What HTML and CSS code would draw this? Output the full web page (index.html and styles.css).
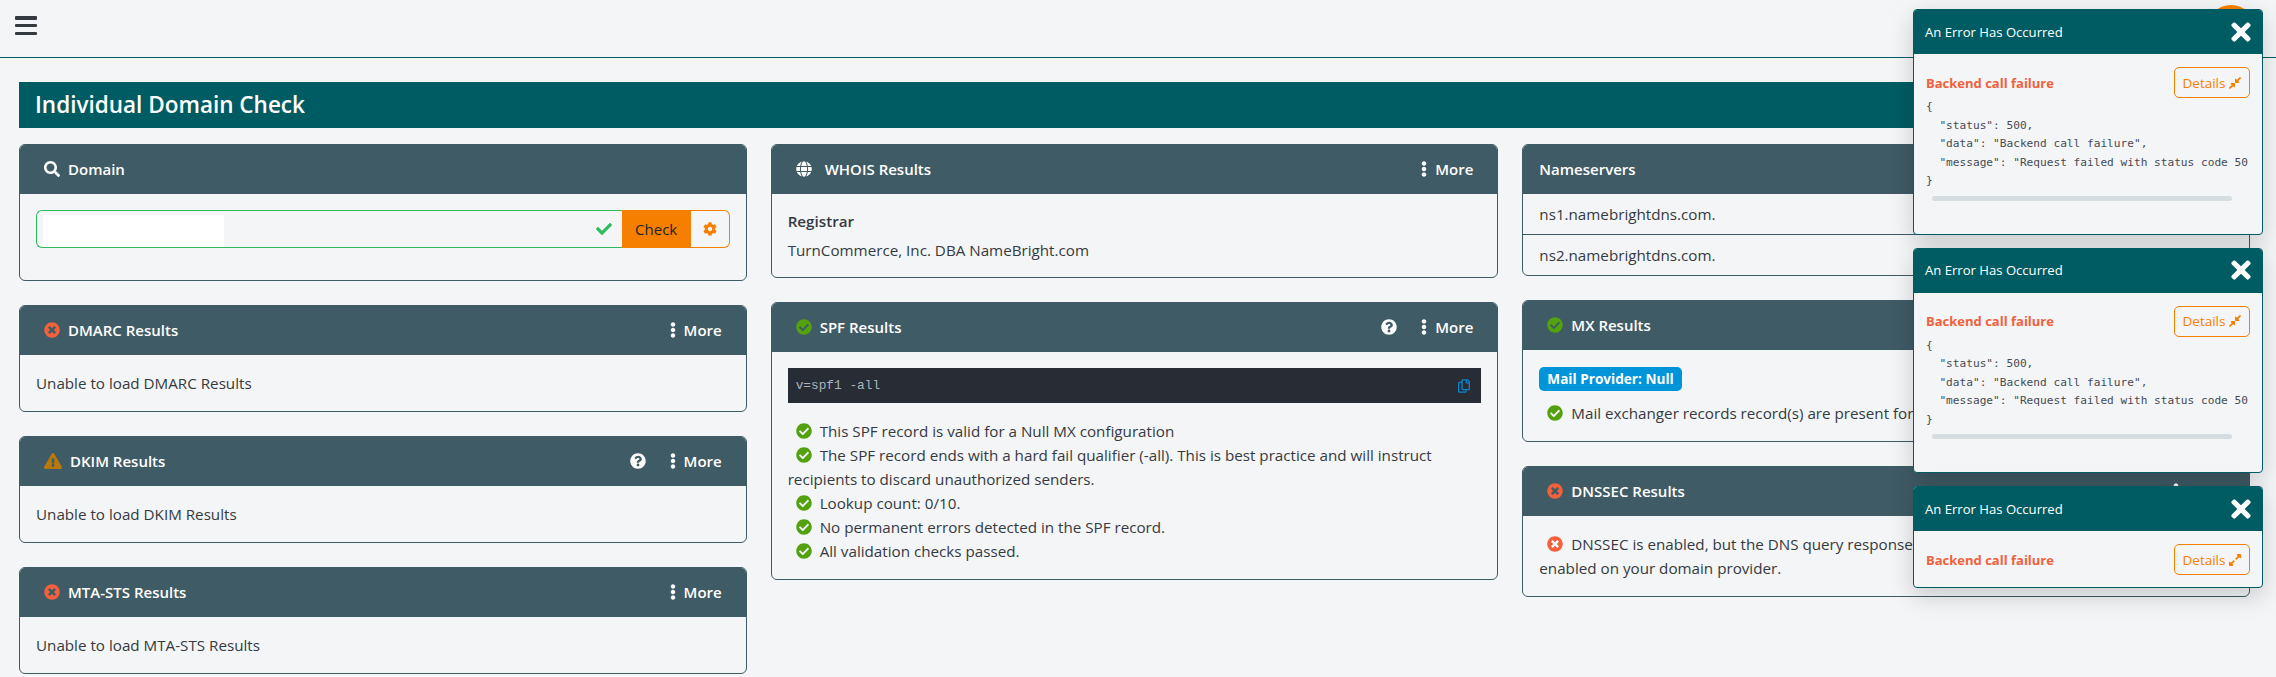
FILE: index.html
```html
<!DOCTYPE html>
<html lang="en">
<head>
    <meta charset="UTF-8">
    <meta name="viewport" content="width=device-width, initial-scale=1.0">
    <title>Individual Domain Check</title>
    <link rel="stylesheet" href="styles.css">
</head>
<body>
    <!-- icon sprite -->
    <svg class="sprite" xmlns="http://www.w3.org/2000/svg">
        <symbol id="i-search" viewBox="0 0 512 512"><path d="M505 442.7L405.3 343c-4.5-4.5-10.6-7-17-7H372c27.6-35.3 44-79.7 44-128C416 93.1 322.9 0 208 0S0 93.1 0 208s93.1 208 208 208c48.3 0 92.7-16.4 128-44v16.3c0 6.4 2.5 12.5 7 17l99.7 99.7c9.4 9.4 24.6 9.4 33.9 0l28.3-28.3c9.4-9.4 9.4-24.6.1-34zM208 336c-70.7 0-128-57.2-128-128 0-70.7 57.2-128 128-128 70.7 0 128 57.2 128 128 0 70.7-57.2 128-128 128z"/></symbol>
        <symbol id="i-check" viewBox="0 0 512 512"><path d="M173.898 439.404l-166.4-166.4c-9.997-9.997-9.997-26.206 0-36.204l36.203-36.204c9.997-9.998 26.207-9.998 36.204 0L192 312.69 432.095 72.596c9.997-9.997 26.207-9.997 36.204 0l36.203 36.204c9.997 9.997 9.997 26.206 0 36.204l-294.4 294.401c-9.998 9.997-26.207 9.997-36.204-.001z"/></symbol>
        <symbol id="i-ok" viewBox="0 0 512 512"><path d="M504 256c0 136.967-111.033 248-248 248S8 392.967 8 256 119.033 8 256 8s248 111.033 248 248zM227.314 387.314l184-184c6.248-6.248 6.248-16.379 0-22.627l-22.627-22.627c-6.248-6.249-16.379-6.249-22.628 0L216 308.118l-70.059-70.059c-6.248-6.248-16.379-6.248-22.628 0l-22.627 22.627c-6.248 6.248-6.248 16.379 0 22.627l104 104c6.249 6.249 16.379 6.249 22.628.001z"/></symbol>
        <symbol id="i-fail" viewBox="0 0 512 512"><path d="M256 8C119 8 8 119 8 256s111 248 248 248 248-111 248-248S393 8 256 8zm121.6 313.1c4.7 4.7 4.7 12.3 0 17L338 377.6c-4.7 4.7-12.3 4.7-17 0L256 312l-65.1 65.6c-4.7 4.7-12.3 4.7-17 0L134.4 338c-4.7-4.7-4.7-12.3 0-17l65.6-65-65.6-65.1c-4.7-4.7-4.7-12.3 0-17l39.6-39.6c4.7-4.7 12.3-4.7 17 0l65 65.7 65.1-65.6c4.7-4.7 12.3-4.7 17 0l39.6 39.6c4.7 4.7 4.7 12.3 0 17L312 256l65.6 65.1z"/></symbol>
        <symbol id="i-help" viewBox="0 0 512 512"><path d="M504 256c0 136.997-111.043 248-248 248S8 392.997 8 256C8 119.083 119.043 8 256 8s248 111.083 248 248zM262.655 90c-54.497 0-89.255 22.957-116.549 63.758-3.536 5.286-2.353 12.415 2.715 16.258l34.699 26.31c5.205 3.947 12.621 3.008 16.665-2.122 17.864-22.658 30.113-35.797 57.303-35.797 20.429 0 45.698 13.148 45.698 32.958 0 14.976-12.363 22.667-32.534 33.976C247.128 238.528 216 254.941 216 296v4c0 6.627 5.373 12 12 12h56c6.627 0 12-5.373 12-12v-1.333c0-28.462 83.186-29.647 83.186-106.667 0-58.002-60.165-102-116.531-102zM256 338c-25.365 0-46 20.635-46 46 0 25.364 20.635 46 46 46s46-20.636 46-46c0-25.365-20.635-46-46-46z"/></symbol>
        <symbol id="i-warn" viewBox="0 0 576 512"><path d="M569.517 440.013C587.975 472.007 564.806 512 527.94 512H48.054c-36.937 0-59.999-40.055-41.577-71.987L246.423 23.985c18.467-32.009 64.72-31.951 83.154 0l239.94 416.028zM288 354c-25.405 0-46 20.595-46 46s20.595 46 46 46 46-20.595 46-46-20.595-46-46-46zm-43.673-165.346l7.418 136c.347 6.364 5.609 11.346 11.982 11.346h48.546c6.373 0 11.635-4.982 11.982-11.346l7.418-136c.375-6.874-5.098-12.654-11.982-12.654h-63.383c-6.884 0-12.356 5.78-11.981 12.654z"/></symbol>
        <symbol id="i-dots" viewBox="0 0 192 512"><path d="M96 184c39.8 0 72 32.2 72 72s-32.2 72-72 72-72-32.2-72-72 32.2-72 72-72zM24 80c0 39.8 32.2 72 72 72s72-32.2 72-72S135.8 8 96 8 24 40.2 24 80zm0 352c0 39.8 32.2 72 72 72s72-32.2 72-72-32.2-72-72-72-72 32.2-72 72z"/></symbol>
        <symbol id="i-globe" viewBox="0 0 496 512"><path d="M336.5 160C322 70.7 287.8 8 248 8s-74 62.7-88.5 152h177zM152 256c0 22.2 1.2 43.5 3.3 64h185.3c2.1-20.5 3.3-41.8 3.3-64s-1.2-43.5-3.3-64H155.3c-2.1 20.5-3.3 41.8-3.3 64zm324.7-96c-28.6-67.9-86.5-120.4-158-141.6 24.4 33.8 41.2 84.7 50 141.6h108zM177.2 18.4C105.8 39.6 47.8 92.1 19.3 160h108c8.7-56.9 25.5-107.8 49.9-141.6zM487.4 192H372.7c2.1 21 3.3 42.5 3.3 64s-1.2 43-3.3 64h114.6c5.5-20.5 8.6-41.8 8.6-64s-3.1-43.5-8.5-64zM120 256c0-21.5 1.2-43 3.3-64H8.6C3.2 212.5 0 233.8 0 256s3.2 43.5 8.6 64h114.6c-2-21-3.2-42.5-3.2-64zm39.5 96c14.5 89.3 48.7 152 88.5 152s74-62.7 88.5-152h-177zm159.3 141.6c71.4-21.2 129.4-73.7 158-141.6h-108c-8.8 56.9-25.6 107.8-50 141.6zM19.3 352c28.6 67.9 86.5 120.4 158 141.6-24.4-33.8-41.2-84.7-50-141.6h-108z"/></symbol>
        <symbol id="i-cog" viewBox="0 0 512 512"><path d="M487.4 315.7l-42.6-24.6c4.3-23.2 4.3-47 0-70.2l42.6-24.6c4.9-2.8 7.1-8.6 5.5-14-11.1-35.6-30-67.8-54.7-94.6-3.8-4.1-10-5.1-14.8-2.3L380.8 110c-17.9-15.4-38.5-27.3-60.8-35.1V25.8c0-5.6-3.9-10.5-9.4-11.7-36.7-8.2-74.3-7.8-109.2 0-5.5 1.2-9.4 6.1-9.4 11.7V75c-22.2 7.9-42.8 19.8-60.8 35.1L88.7 85.5c-4.9-2.8-11-1.9-14.8 2.3-24.7 26.7-43.6 58.9-54.7 94.6-1.7 5.4.6 11.2 5.5 14L67.3 221c-4.3 23.2-4.3 47 0 70.2l-42.6 24.6c-4.9 2.8-7.1 8.6-5.5 14 11.1 35.6 30 67.8 54.7 94.6 3.8 4.1 10 5.1 14.8 2.3l42.6-24.6c17.9 15.4 38.5 27.3 60.8 35.1v49.2c0 5.6 3.9 10.5 9.4 11.7 36.7 8.2 74.3 7.8 109.2 0 5.5-1.2 9.4-6.1 9.4-11.7v-49.2c22.2-7.9 42.8-19.8 60.8-35.1l42.6 24.6c4.9 2.8 11 1.9 14.8-2.3 24.7-26.7 43.6-58.9 54.7-94.6 1.5-5.5-.7-11.3-5.6-14.1zM256 336c-44.1 0-80-35.9-80-80s35.9-80 80-80 80 35.9 80 80-35.9 80-80 80z"/></symbol>
        <symbol id="i-times" viewBox="0 0 352 512"><path d="M242.72 256l100.07-100.07c12.28-12.28 12.28-32.19 0-44.48l-22.24-22.24c-12.28-12.28-32.19-12.28-44.48 0L176 189.28 75.93 89.21c-12.28-12.28-32.19-12.28-44.48 0L9.21 111.45c-12.28 12.28-12.28 32.19 0 44.48L109.28 256 9.21 356.07c-12.28 12.28-12.28 32.19 0 44.48l22.24 22.24c12.28 12.28 32.2 12.28 44.48 0L176 322.72l100.07 100.07c12.28 12.28 32.2 12.28 44.48 0l22.24-22.24c12.28-12.28 12.28-32.19 0-44.48L242.72 256z"/></symbol>
        <symbol id="i-expand" viewBox="0 0 448 512"><path d="M212.686 315.314L120 408l32.922 31.029c15.12 15.12 4.412 40.971-16.97 40.971h-112C10.697 480 0 469.255 0 456V344c0-21.382 25.803-32.09 40.922-16.971L72 360l92.686-92.686c6.248-6.248 16.379-6.248 22.627 0l25.373 25.373c6.249 6.248 6.249 16.378 0 22.627zm22.628-118.628L328 104l-32.922-31.029C279.958 57.851 290.666 32 312.048 32h112C437.303 32 448 42.745 448 56v112c0 21.382-25.803 32.09-40.922 16.971L376 152l-92.686 92.686c-6.248 6.248-16.379 6.248-22.627 0l-25.373-25.373c-6.249-6.248-6.249-16.378 0-22.627z"/></symbol>
        <symbol id="i-compress" viewBox="0 0 448 512"><path d="M4.686 427.314L104 328l-32.922-31.029C55.958 281.851 66.666 256 88.048 256h112C213.303 256 224 266.745 224 280v112c0 21.382-25.803 32.09-40.922 16.971L152 376l-99.314 99.314c-6.248 6.248-16.379 6.248-22.627 0L4.686 449.941c-6.248-6.248-6.248-16.379 0-22.627zM443.314 84.686L344 184l32.922 31.029c15.12 15.12 4.412 40.971-16.97 40.971h-112C234.697 256 224 245.255 224 232V120c0-21.382 25.803-32.09 40.922-16.971L296 136l99.314-99.314c6.248-6.248 16.379-6.248 22.627 0l25.373 25.373c6.248 6.248 6.248 16.379 0 22.627z"/></symbol>
        <symbol id="i-copy" viewBox="0 0 448 512"><path d="M433.941 65.941l-51.882-51.882A48 48 0 0 0 348.118 0H176c-26.51 0-48 21.49-48 48v48H48c-26.51 0-48 21.49-48 48v320c0 26.51 21.49 48 48 48h224c26.51 0 48-21.49 48-48v-48h80c26.51 0 48-21.49 48-48V99.882a48 48 0 0 0-14.059-33.941zM266 464H54a6 6 0 0 1-6-6V150a6 6 0 0 1 6-6h74v224c0 26.51 21.49 48 48 48h96v42a6 6 0 0 1-6 6zm128-96H182a6 6 0 0 1-6-6V54a6 6 0 0 1 6-6h106v88c0 13.255 10.745 24 24 24h88v202a6 6 0 0 1-6 6zm6-256h-64V48h9.632c1.591 0 3.117.632 4.243 1.757l48.368 48.368a6 6 0 0 1 1.757 4.243V112z"/></symbol>
    </svg>

    <nav class="navbar">
        <button class="menu-btn" aria-label="Menu"><span></span><span></span><span></span></button>
        <div class="avatar"></div>
    </nav>

    <main class="content">
        <h1 class="page-title">Individual Domain Check</h1>
        <div class="columns">
            <div class="col">
                <section class="card">
                    <header class="card-head">
                        <div class="head-title"><svg class="ico"><use href="#i-search"/></svg>Domain</div>
                    </header>
                    <div class="card-body domain-body">
                        <div class="domain-group">
                            <div class="domain-input">
                                <div class="redacted"></div>
                                <svg class="ico valid-tick"><use href="#i-check"/></svg>
                            </div>
                            <button class="check-btn">Check</button>
                            <button class="cog-btn" aria-label="Settings"><svg class="ico"><use href="#i-cog"/></svg></button>
                        </div>
                    </div>
                </section>
                <section class="card">
                    <header class="card-head">
                        <div class="head-title"><svg class="ico red"><use href="#i-fail"/></svg>DMARC Results</div>
                        <div class="head-actions"><span class="more"><svg class="ico dots"><use href="#i-dots"/></svg>More</span></div>
                    </header>
                    <div class="card-body">Unable to load DMARC Results</div>
                </section>
                <section class="card">
                    <header class="card-head">
                        <div class="head-title"><svg class="ico warn"><use href="#i-warn"/></svg>DKIM Results</div>
                        <div class="head-actions"><svg class="ico"><use href="#i-help"/></svg><span class="more"><svg class="ico dots"><use href="#i-dots"/></svg>More</span></div>
                    </header>
                    <div class="card-body">Unable to load DKIM Results</div>
                </section>
                <section class="card">
                    <header class="card-head">
                        <div class="head-title"><svg class="ico red"><use href="#i-fail"/></svg>MTA-STS Results</div>
                        <div class="head-actions"><span class="more"><svg class="ico dots"><use href="#i-dots"/></svg>More</span></div>
                    </header>
                    <div class="card-body">Unable to load MTA-STS Results</div>
                </section>
            </div>

            <div class="col">
                <section class="card">
                    <header class="card-head">
                        <div class="head-title"><svg class="ico globe"><use href="#i-globe"/></svg>WHOIS Results</div>
                        <div class="head-actions"><span class="more"><svg class="ico dots"><use href="#i-dots"/></svg>More</span></div>
                    </header>
                    <div class="card-body whois-body">
                        <div class="whois-label">Registrar</div>
                        <div>TurnCommerce, Inc. DBA NameBright.com</div>
                    </div>
                </section>
                <section class="card">
                    <header class="card-head">
                        <div class="head-title"><svg class="ico green"><use href="#i-ok"/></svg>SPF Results</div>
                        <div class="head-actions"><svg class="ico"><use href="#i-help"/></svg><span class="more"><svg class="ico dots"><use href="#i-dots"/></svg>More</span></div>
                    </header>
                    <div class="card-body">
                        <div class="record"><code>v=spf1 -all</code><svg class="copy"><use href="#i-copy"/></svg></div>
                        <div class="result-line"><svg class="ico green"><use href="#i-ok"/></svg>This SPF record is valid for a Null MX configuration</div>
                        <div class="result-line"><svg class="ico green"><use href="#i-ok"/></svg>The SPF record ends with a hard fail qualifier (-all). This is best practice and will instruct recipients to discard unauthorized senders.</div>
                        <div class="result-line"><svg class="ico green"><use href="#i-ok"/></svg>Lookup count: 0/10.</div>
                        <div class="result-line"><svg class="ico green"><use href="#i-ok"/></svg>No permanent errors detected in the SPF record.</div>
                        <div class="result-line"><svg class="ico green"><use href="#i-ok"/></svg>All validation checks passed.</div>
                    </div>
                </section>
            </div>

            <div class="col">
                <section class="card">
                    <header class="card-head ns-head">
                        <div class="head-title">Nameservers</div>
                    </header>
                    <ul class="ns-list">
                        <li>ns1.namebrightdns.com.</li>
                        <li>ns2.namebrightdns.com.</li>
                    </ul>
                </section>
                <section class="card">
                    <header class="card-head">
                        <div class="head-title"><svg class="ico green"><use href="#i-ok"/></svg>MX Results</div>
                        <div class="head-actions"><span class="more"><svg class="ico dots"><use href="#i-dots"/></svg>More</span></div>
                    </header>
                    <div class="card-body">
                        <span class="badge">Mail Provider: Null</span>
                        <div class="result-line mx-line"><svg class="ico green"><use href="#i-ok"/></svg>Mail exchanger records record(s) are present for this domain.</div>
                    </div>
                </section>
                <section class="card">
                    <header class="card-head">
                        <div class="head-title"><svg class="ico red"><use href="#i-fail"/></svg>DNSSEC Results</div>
                        <div class="head-actions"><span class="more"><svg class="ico dots"><use href="#i-dots"/></svg>More</span></div>
                    </header>
                    <div class="card-body">
                        <div class="result-line"><svg class="ico red"><use href="#i-fail"/></svg>DNSSEC is enabled, but the DNS query response does not have the AD flag. Ensure it is<br>enabled on your domain provider.</div>
                    </div>
                </section>
            </div>
        </div>
    </main>

    <div class="toasts">
        <div class="toast">
            <div class="toast-head">An Error Has Occurred<svg class="toast-close"><use href="#i-times"/></svg></div>
            <div class="toast-body">
                <div class="toast-row">
                    <strong class="toast-msg">Backend call failure</strong>
                    <button class="details-btn">Details<svg class="ico"><use href="#i-compress"/></svg></button>
                </div>
                <pre class="toast-pre">{
  "status": 500,
  "data": "Backend call failure",
  "message": "Request failed with status code 500"
}</pre>
                <div class="fake-scroll"></div>
            </div>
        </div>
        <div class="toast">
            <div class="toast-head">An Error Has Occurred<svg class="toast-close"><use href="#i-times"/></svg></div>
            <div class="toast-body">
                <div class="toast-row">
                    <strong class="toast-msg">Backend call failure</strong>
                    <button class="details-btn">Details<svg class="ico"><use href="#i-compress"/></svg></button>
                </div>
                <pre class="toast-pre">{
  "status": 500,
  "data": "Backend call failure",
  "message": "Request failed with status code 500"
}</pre>
                <div class="fake-scroll"></div>
            </div>
        </div>
        <div class="toast">
            <div class="toast-head">An Error Has Occurred<svg class="toast-close"><use href="#i-times"/></svg></div>
            <div class="toast-body">
                <div class="toast-row">
                    <strong class="toast-msg">Backend call failure</strong>
                    <button class="details-btn">Details<svg class="ico"><use href="#i-expand"/></svg></button>
                </div>
            </div>
        </div>
    </div>
</body>
</html>
```

FILE: styles.css
```css
* {
    box-sizing: border-box;
}

body {
    margin: 0;
    height: 677px;
    overflow: hidden;
    background-color: #f4f5f7;
    color: #343a40;
    font-family: 'Open Sans', 'Noto Sans', sans-serif;
    font-size: 15.2px;
    line-height: 24px;
}

.sprite {
    display: none;
}

.ico {
    width: 16px;
    height: 16px;
    fill: currentColor;
    flex: none;
}

.red { color: #f0613c; }
.green { color: #53a10d; }
.warn { color: #b8790a; }

.ico.warn {
    width: 18px;
}

/* top bar */
.navbar {
    height: 58px;
    border-bottom: 1px solid #005c63;
    display: flex;
    justify-content: space-between;
    padding: 16px 21px 0 15px;
}

.menu-btn {
    width: 22px;
    height: 19px;
    padding: 0;
    border: 0;
    background: none;
    display: flex;
    flex-direction: column;
    justify-content: space-between;
}

.menu-btn span {
    display: block;
    height: 3.500px;
    background-color: #343a40;
    border-radius: 1px;
}

.avatar {
    width: 48px;
    height: 48px;
    margin-top: -11px;
    border-radius: 50%;
    background-color: #f77f00;
}

/* page */
.content {
    padding: 24px 26px 0 19px;
}

.page-title {
    margin: 0 0 16px;
    height: 46px;
    padding: 0 16px;
    background-color: #005c63;
    color: #fff;
    font-size: 22.5px;
    font-weight: 600;
    line-height: 45px;
}

.columns {
    display: grid;
    grid-template-columns: repeat(3, 1fr);
    gap: 24px;
    align-items: start;
}

.col {
    display: flex;
    flex-direction: column;
    gap: 24px;
}

/* cards */
.card {
    border: 1px solid #3f5b65;
    border-radius: 6px;
    overflow: hidden;
}

.card-head {
    height: 49px;
    padding: 0 24px 2px;
    display: flex;
    align-items: center;
    justify-content: space-between;
    background-color: #3f5b65;
    color: #fff;
    font-weight: 600;
    font-size: 15px;
}

.ns-head {
    padding-left: 16px;
}

.head-title {
    display: flex;
    align-items: center;
    gap: 8px;
}

.head-title .globe {
    margin-right: 5px;
}

.head-actions {
    display: flex;
    align-items: center;
    gap: 24px;
}

.more {
    display: flex;
    align-items: center;
    gap: 8px;
}

.ico.dots {
    width: 6px;
}

.card-body {
    padding: 16px;
}

/* domain search */
.domain-body {
    padding-bottom: 32px;
}

.domain-group {
    display: flex;
    height: 38px;
}

.domain-input {
    flex: 1;
    display: flex;
    align-items: center;
    justify-content: space-between;
    padding: 4px 10px 0 6px;
    border: 1px solid #2dbb5e;
    border-right: 0;
    border-radius: 6px 0 0 6px;
}

.redacted {
    width: 181px;
    height: 32px;
    background-color: #fff;
}

.valid-tick {
    color: #2dbb5e;
    margin-top: -4px;
}

.check-btn {
    width: 69px;
    border: 0;
    background-color: #f77f00;
    color: #212529;
    font: inherit;
    font-size: 15px;
}

.cog-btn {
    width: 39px;
    padding: 0;
    background: none;
    color: #f77f00;
    border: 1px solid #f77f00;
    border-left: 0;
    border-radius: 0 6px 6px 0;
}

.cog-btn .ico {
    width: 14px;
    height: 14px;
    display: block;
    margin: 0 auto;
}

/* whois */
.whois-body {
    padding: 15px 16px;
}

.whois-label {
    font-weight: 600;
    margin-bottom: 5px;
}

/* spf record */
.record {
    height: 35px;
    margin-bottom: 16px;
    padding: 0 11px 0 8px;
    display: flex;
    align-items: center;
    justify-content: space-between;
    background-color: #282c34;
}

.record code {
    font-family: 'Liberation Mono', monospace;
    font-size: 12.8px;
    color: #abb2bf;
}

.copy {
    width: 12px;
    height: 14px;
    fill: #0a84c6;
}

.result-line > .ico {
    margin: 0 8px;
    vertical-align: -2px;
}

.mx-line {
    margin-top: 10px;
}

.ns-list {
    margin: 0;
    padding: 0;
    list-style: none;
}

.ns-list li {
    height: 40px;
    padding: 8px 16px;
}

.ns-list li + li {
    height: 41px;
    border-top: 1px solid #3f5b65;
}

.badge {
    display: inline-block;
    height: 24px;
    padding: 0 8px;
    border-radius: 5px;
    background-color: #0095d9;
    color: #fff;
    font-size: 13.6px;
    font-weight: 700;
    line-height: 24px;
}

/* toasts */
.toasts {
    position: absolute;
    top: 9px;
    left: 1913px;
    width: 350px;
    display: flex;
    flex-direction: column;
    gap: 13px;
}

.toast {
    border: 1px solid #005c63;
    border-radius: 4px;
    background-color: #f4f5f7;
    box-shadow: 0 8px 24px rgba(0, 0, 0, .18);
    overflow: hidden;
}

.toast-head {
    height: 45px;
    margin: -1px -1px 0;
    padding: 0 12px;
    display: flex;
    align-items: center;
    justify-content: space-between;
    background-color: #005c63;
    color: #fff;
    font-size: 13.1px;
}

.toast-close {
    width: 20px;
    height: 28px;
    fill: #fff;
}

.toast-body {
    padding: 13px 12px 12px;
}

.toast-row {
    display: flex;
    align-items: center;
    justify-content: space-between;
}

.toast-msg {
    color: #f0613c;
    font-size: 13px;
    font-weight: 700;
}

.details-btn {
    width: 76px;
    height: 31px;
    padding: 0;
    display: flex;
    align-items: center;
    justify-content: center;
    gap: 4px;
    background: none;
    border: 1px solid #f77f00;
    border-radius: 5px;
    color: #f77f00;
    font: inherit;
    font-size: 13.5px;
}

.details-btn .ico {
    width: 12px;
    height: 14px;
}

.toast-pre {
    margin: 0 2px 0 0;
    overflow: hidden;
    font-family: 'DejaVu Sans Mono', monospace;
    font-size: 11.15px;
    line-height: 18.500px;
    color: #454c53;
}

.fake-scroll {
    width: 300px;
    height: 5px;
    margin: 5px 0 21px 6px;
    border-radius: 3px;
    background-color: #d5dde0;
}
```
